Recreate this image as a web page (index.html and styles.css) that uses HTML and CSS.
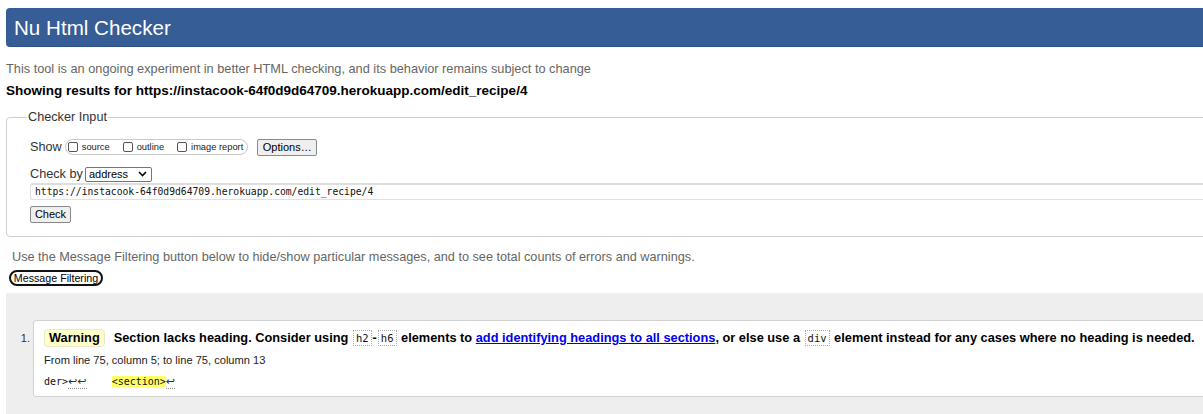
FILE: index.html
```html
<!DOCTYPE html>
<html lang="en">
<head>
<meta charset="utf-8">
<title>Nu Html Checker</title>
<link rel="stylesheet" href="styles.css">
</head>
<body>
<div class="page">
  <h1 class="masthead">Nu Html Checker</h1>
  <p class="intro">This tool is an ongoing experiment in better HTML checking, and its behavior remains subject to change</p>
  <p class="showing">Showing results for https://instacook-64f0d9d64709.herokuapp.com/edit_recipe/4</p>
  <fieldset class="checker">
    <legend>Checker Input</legend>
    <div class="row show-row">
      <span class="lbl">Show</span>
      <span class="opts">
        <label class="opt"><span class="cb"></span>source</label>
        <label class="opt"><span class="cb"></span>outline</label>
        <label class="opt"><span class="cb"></span>image report</label>
      </span>
      <button class="btn options">Options…</button>
    </div>
    <div class="row by-row">
      <span class="lbl">Check by</span>
      <span class="select">address<svg class="chev" width="9" height="6" viewBox="0 0 9 6"><path d="M1 1 L4.5 4.5 L8 1" fill="none" stroke="#000" stroke-width="1.6"/></svg></span>
    </div>
    <div class="urlbox">https://instacook-64f0d9d64709.herokuapp.com/edit_recipe/4</div>
    <button class="btn check">Check</button>
  </fieldset>
  <p class="filter-note">Use the Message Filtering button below to hide/show particular messages, and to see total counts of errors and warnings.</p>
  <button class="btn filter">Message Filtering</button>
  <div class="results">
    <ol class="msgs">
      <li class="msg">
        <p class="msg-text"><span class="badge">Warning</span><span class="body">Section lacks heading. Consider using <code>h2</code>-<code>h6</code> elements to <a href="#">add identifying headings to all sections</a>, or else use a <code>div</code> element instead for any cases where no heading is needed.</span></p>
        <p class="loc">From line 75, column 5; to line 75, column 13</p>
        <p class="extract"><code>der&gt;<span class="lf">↩↩</span>    <b class="hl">&lt;section&gt;</b><span class="lf">↩</span></code></p>
      </li>
    </ol>
  </div>
</div>
</body>
</html>
```

FILE: styles.css
```css
html, body {
  margin: 0;
  padding: 0;
  overflow: hidden;
  background: #fff;
}
body {
  font-family: "Liberation Sans", Arial, sans-serif;
  color: #000;
}
.page {
  width: 1260px;
  padding: 8px 0 0 6px;
}
.masthead {
  margin: 0;
  width: 1197px;
  height: 39px;
  line-height: 39px;
  padding-left: 8px;
  background: #365d95;
  border-bottom: 1px solid #2f5286;
  box-sizing: border-box;
  border-radius: 4px 0 0 4px;
  color: #fff;
  font-weight: normal;
  font-size: 20.6px;
}
.intro {
  margin: 13px 0 0;
  font-size: 12.75px;
  line-height: 18px;
  color: #666;
}
.showing {
  margin: 4px 0 0;
  font-size: 13.5px;
  line-height: 18px;
  font-weight: bold;
}
.checker {
  margin: 9px 0 0;
  padding: 6px 0 13px 23px;
  border: 1px solid #cfcfcf;
  border-radius: 4px;
  min-width: 0;
}
.checker legend {
  margin-left: -3px;
  padding: 0 1px;
  font-size: 12.7px;
  line-height: 16px;
  color: #333;
}
.row {
  display: flex;
  align-items: center;
}
.lbl {
  font-size: 12.7px;
  color: #333;
}
.show-row {
  height: 18px;
  margin-top: 7px;
}
.opts {
  display: flex;
  align-items: center;
  height: 16px;
  margin-left: 3px;
  padding: 0 4px 0 2px;
  border: 1px solid #c8c8c8;
  border-radius: 8px;
  box-sizing: border-box;
  font-size: 9.3px;
  color: #222;
}
.opt {
  display: flex;
  align-items: center;
  margin-right: 13px;
}
.opt:last-child { margin-right: 0; }
.cb {
  width: 10px;
  height: 10px;
  border: 1px solid #555;
  border-radius: 2px;
  margin-right: 4px;
  box-sizing: border-box;
  background: #fff;
}
.btn {
  font-family: "Liberation Sans", Arial, sans-serif;
  font-size: 11px;
  color: #000;
  background: #efefef;
  border: 1px solid #8a8a8a;
  border-radius: 2px;
  padding: 0;
  height: 17px;
  line-height: 15px;
  box-sizing: border-box;
}
.options {
  margin-left: 9px;
  width: 60px;
}
.by-row {
  margin-top: 10px;
  height: 16px;
}
.select {
  display: flex;
  align-items: center;
  justify-content: space-between;
  margin-left: 2px;
  width: 67px;
  height: 15px;
  padding: 0 4px 0 3px;
  box-sizing: border-box;
  border: 1px solid #767676;
  border-radius: 2px;
  font-size: 11px;
  color: #000;
}
.urlbox {
  margin-top: 1px;
  height: 17px;
  line-height: 14px;
  padding-left: 4px;
  border: 1px solid #e0e0e0;
  border-top: 2px solid #dedede;
  border-right: none;
  border-radius: 3px 0 0 3px;
  box-sizing: border-box;
  font-family: "DejaVu Sans Mono", "Liberation Mono", monospace;
  font-size: 9.7px;
  color: #111;
}
.check {
  display: block;
  margin-top: 6px;
  width: 41px;
}
.filter-note {
  margin: 11px 0 0 6px;
  font-size: 12.7px;
  line-height: 18px;
  color: #666;
}
.filter {
  display: block;
  margin: 4px 0 0 3px;
  width: 94px;
  height: 16px;
  line-height: 12px;
  background: #fff;
  border: 2px solid #111;
  border-radius: 8px;
  font-size: 10.7px;
}
.results {
  margin-top: 7px;
  background: #eee;
  height: 140px;
  padding-top: 27px;
  box-sizing: border-box;
}
.msgs {
  margin: 0;
  padding: 0 0 0 27px;
  font-size: 11px;
  color: #333;
}
.msg {
  background: #fff;
  border: 1px solid #d2d2d2;
  border-radius: 3px;
  padding: 8px 0 7px 10px;
}
.msg p { margin: 0; }
.msg-text {
  display: flex;
  align-items: center;
  font-size: 12.8px;
  line-height: 18px;
  font-weight: bold;
  color: #000;
  white-space: nowrap;
}
.badge {
  display: inline-block;
  background: #ffffcc;
  border: 1px solid #ece9c8;
  border-radius: 4px;
  padding: 0 4px;
  height: 18px;
  box-sizing: border-box;
  line-height: 16px;
  margin-right: 9px;
}
.msg-text code {
  font-family: "DejaVu Sans Mono", "Liberation Mono", monospace;
  font-weight: normal;
  font-size: 10.5px;
  border: 1px dotted #aaa;
  padding: 1px 2px;
  margin: 0 1px;
  color: #111;
}
.msg-text a {
  color: #00e;
  text-decoration: underline;
}
.loc {
  margin-top: 6px !important;
  font-size: 11.1px;
  line-height: 14px;
  color: #222;
}
.extract {
  margin-top: 7px !important;
  line-height: 14px;
}
.extract code {
  font-family: "DejaVu Sans Mono", "Liberation Mono", monospace;
  font-size: 10px;
  white-space: pre;
  color: #111;
}
.lf {
  border-bottom: 1px dotted #888;
  color: #333;
  font-family: "DejaVu Sans", sans-serif;
  font-size: 11px;
}
.hl {
  font-weight: normal;
  background: #ffff66;
  margin-left: 1px;
}
```
